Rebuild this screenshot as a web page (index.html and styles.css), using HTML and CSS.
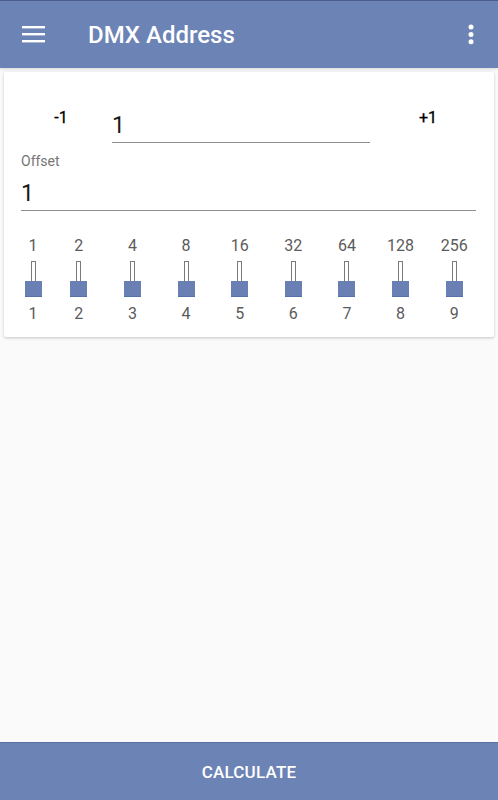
FILE: index.html
```html
<!doctype html>
<html>
<head>
<title>DMX Address</title>
<link rel="stylesheet" href="styles.css">
</head>
<body>
<header class="appbar">
	<button class="icon menu" aria-label="Menu">
		<svg width="23" height="17" viewBox="0 0 23 17"><rect y="0" width="23" height="2.4"/><rect y="7" width="23" height="2.4"/><rect y="14" width="23" height="2.4"/></svg>
	</button>
	<h1 class="title">DMX Address</h1>
	<button class="icon more" aria-label="More">
		<svg width="6" height="21" viewBox="0 0 6 21"><circle cx="3" cy="3" r="2.5"/><circle cx="3" cy="10.4" r="2.5"/><circle cx="3" cy="17.8" r="2.5"/></svg>
	</button>
</header>

<main class="content">
	<form class="card" id="dmx">
		<div class="stepper">
			<button type="button" class="step" id="minus">-1</button>
			<input type="text" class="field address" id="address" value="1">
			<button type="button" class="step" id="plus">+1</button>
		</div>
		<label class="caption" for="offset">Offset</label>
		<input type="text" class="field offset" id="offset" value="1">
		<div class="switches" id="switches"></div>
	</form>
</main>

<button class="calculate" id="calculate">CALCULATE</button>

<script>
var list = document.getElementById('switches');

for (var i = 0; i < 9; i++) {
	var col = document.createElement('div');
	col.className = 'dip';
	col.innerHTML = '<span class="weight">' + Math.pow(2, i) + '</span>' +
		'<span class="track"></span><span class="knob"></span>' +
		'<span class="num">' + (i + 1) + '</span>';
	list.appendChild(col);
}
</script>
</body>
</html>
```

FILE: styles.css
```css
html, body {
  margin: 0;
  height: 100%;
}
body {
  display: flex;
  flex-direction: column;
  background: #fafafa;
  font-family: Roboto, "Liberation Sans", sans-serif;
}
button {
  font-family: inherit;
  border: 0;
  background: none;
  padding: 0;
}

.appbar {
  display: flex;
  align-items: center;
  height: 67px;
  background: #6c83b5;
  border-top: 1px solid #4c5f8a;
  box-shadow: 0 1px 3px rgba(0,0,0,.15);
  color: #fff;
}
.icon svg {
  display: block;
  fill: #fff;
}
.menu {
  margin-left: 22px;
}
.title {
  margin: 0 0 0 43px;
  font-size: 24px;
  line-height: 28px;
  font-weight: 500;
  padding-top: 1px;
  flex: 1;
}
.more {
  margin-right: 24px;
}

.content {
  flex: 1;
}
.card {
  margin: 4px 4px 0;
  padding: 0 18px 13px 17px;
  background: #fff;
  border-radius: 2px;
  box-shadow: 0 1px 3px rgba(0,0,0,.22);
}

.stepper {
  display: flex;
  align-items: flex-start;
  padding-top: 36px;
}
.step {
  width: 80px;
  font-size: 16px;
  line-height: 20px;
  font-weight: 400;
  color: #000;
  -webkit-text-stroke: .3px #000;
}
.field {
  display: block;
  box-sizing: content-box;
  height: 28px;
  line-height: 28px;
  padding: 0 0 2px;
  border: 0;
  border-bottom: 1.5px solid #8e8e8e;
  font-family: inherit;
  font-size: 23px;
  color: #1a1a1a;
  background: none;
  outline: none;
}
.address {
  width: 258px;
  margin: 4px 18px 0 11px;
}
.caption {
  display: block;
  margin-top: 10px;
  font-size: 14px;
  line-height: 16px;
  color: #757575;
}
.offset {
  width: 100%;
  margin-top: 11px;
}

.switches {
  display: grid;
  grid-template-columns: 38px repeat(8, 1fr);
  margin: 25px -5px 0 -7px;
}
.dip {
  display: flex;
  flex-direction: column;
  align-items: center;
  font-size: 16px;
  line-height: 20px;
  color: #5b5b5b;
}
.track {
  width: 3px;
  height: 19px;
  margin-top: 5px;
  border: 1px solid #7a7a7a;
  border-bottom: 0;
  background: #fff;
}
.knob {
  width: 17px;
  height: 16px;
  background: #6a80b4;
  box-shadow: inset 0 -1px 0 #5670a8;
}
.num {
  margin-top: 7px;
}

.calculate {
  height: 58px;
  background: #6c83b5;
  border-top: 1px solid #5a70a3;
  color: #fff;
  font-size: 17px;
  font-weight: 500;
  letter-spacing: .2px;
}
```
